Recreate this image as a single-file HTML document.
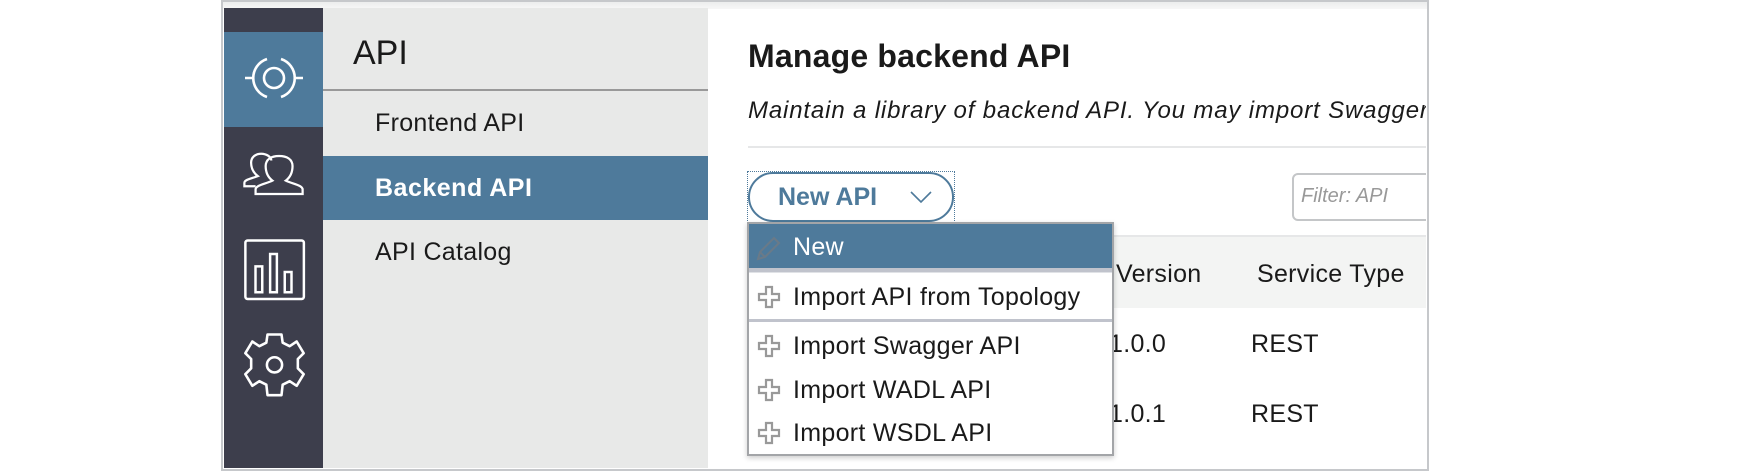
<!DOCTYPE html>
<html><head><meta charset="utf-8"><style>
*{box-sizing:border-box;margin:0;padding:0}
body{width:1756px;height:470px;background:#fff;position:relative;overflow:hidden;font-family:"Liberation Sans",sans-serif;color:#1a1a1a}
.a{position:absolute;white-space:nowrap}
.t{font-size:25px;line-height:30px;letter-spacing:0.3px}
</style></head><body>
<div class="a" style="left:221px;top:0;width:1208px;height:471px;border:2px solid #c6c8cb;background:#fff"></div>
<div class="a" style="left:223px;top:2px;width:1204px;height:7px;background:linear-gradient(#eceded,#f7f7f7)"></div>
<!-- sidebar -->
<div class="a" style="left:224px;top:8px;width:99px;height:460px;background:#3d3e4c"></div>
<div class="a" style="left:224px;top:32px;width:99px;height:95px;background:#4e7a9b"></div>
<svg class="a" style="left:224px;top:32px" width="99" height="95" viewBox="0 0 99 95">
<g fill="none" stroke="#fff" stroke-width="2.6">
<circle cx="50" cy="46" r="10"/>
<path d="M43 27 A20 20 0 0 0 43 65"/>
<path d="M57 27 A20 20 0 0 1 57 65"/>
<path d="M21 46 H30 M70 46 H79"/>
</g></svg>
<svg class="a" style="left:224px;top:147px" width="99" height="56" viewBox="0 0 88 50">
<g fill="none" stroke="#fff" stroke-width="2">
<path d="M28 35 H18 V32 C18 29 25 28 30 26 C26 23 24 19 24 14 C24 9 28 6 33 6 C38 6 42 9 42 12"/>
<path d="M28 42 V38 C28 34 37 33 43 30 C39 27 37 23 37 17 C37 11 42 8 49 8 C56 8 61 11 61 17 C61 23 59 27 55 30 C61 33 70 34 70 38 V42 Z"/>
</g></svg>
<svg class="a" style="left:224px;top:237px" width="99" height="70" viewBox="0 0 88 62">
<g fill="none" stroke="#fff" stroke-width="2.2">
<rect x="19" y="3" width="52" height="52" rx="2"/>
<rect x="28" y="26" width="6" height="23"/><rect x="41" y="15" width="6" height="34"/><rect x="54" y="31" width="6" height="18"/>
</g></svg>
<svg class="a" style="left:243px;top:331px" width="63" height="70" viewBox="0 0 54 60">
<g fill="none" stroke="#fff" stroke-width="2.2" stroke-linejoin="round">
<path d="M21 3 H33 L34 10 L40 13 L46 9 L52 19 L47 24 V32 L52 37 L46 47 L40 43 L34 46 L33 55 H21 L20 46 L14 43 L8 47 L2 37 L7 32 V24 L2 19 L8 9 L14 13 L20 10 Z"/>
<circle cx="27" cy="29" r="6.5"/>
</g></svg>
<!-- submenu -->
<div class="a" style="left:323px;top:8px;width:385px;height:460px;background:#e8e9e8"></div>
<div class="a" style="left:353px;top:33px;font-size:34px;line-height:40px">API</div>
<div class="a" style="left:323px;top:89px;width:385px;height:2px;background:#999"></div>
<div class="a t" style="left:375px;top:108px">Frontend API</div>
<div class="a" style="left:323px;top:156px;width:385px;height:64px;background:#4e7a9b"></div>
<div class="a" style="left:375px;top:156px;line-height:64px;font-size:25px;font-weight:bold;color:#fff;letter-spacing:0.5px">Backend API</div>
<div class="a t" style="left:375px;top:237px">API Catalog</div>
<!-- main -->
<div class="a" style="left:748px;top:36px;font-size:32px;line-height:40px;font-weight:bold;letter-spacing:0.2px">Manage backend API</div>
<div class="a" style="left:748px;top:96px;font-size:24px;line-height:30px;font-style:italic;letter-spacing:0.85px;width:678px;overflow:hidden">Maintain a library of backend API. You may import Swagger files</div>
<div class="a" style="left:748px;top:146px;width:678px;height:2px;background:#e6e7e8"></div>
<div class="a" style="left:747px;top:171px;width:208px;height:52px;border:1px dotted #4e7a9b"></div>
<div class="a" style="left:748px;top:172px;width:206px;height:50px;border:2px solid #4e7a9b;border-radius:25px;background:#fff"></div>
<div class="a" style="left:778px;top:182px;font-size:25px;line-height:30px;font-weight:bold;color:#4e7a9b">New API</div>
<svg class="a" style="left:909px;top:190px" width="24" height="14"><path d="M2 2 L12 12 L22 2" fill="none" stroke="#4e7a9b" stroke-width="1.6"/></svg>
<div class="a" style="left:1292px;top:173px;width:134px;height:48px;overflow:hidden">
<div class="a" style="left:0;top:0;width:160px;height:48px;border:2px solid #c4c6c8;border-radius:6px"></div>
<div class="a" style="left:9px;top:11px;font-size:20px;line-height:24px;font-style:italic;color:#999">Filter: API</div>
</div>
<div class="a" style="left:748px;top:235px;width:678px;height:2px;background:#e6e7e8"></div>
<div class="a" style="left:748px;top:237px;width:678px;height:71px;background:#f3f4f3"></div>
<div class="a t" style="left:1116px;top:259px">Version</div>
<div class="a t" style="left:1257px;top:259px">Service Type</div>
<div class="a t" style="left:1109px;top:329px">1.0.0</div>
<div class="a t" style="left:1251px;top:329px">REST</div>
<div class="a t" style="left:1109px;top:399px">1.0.1</div>
<div class="a t" style="left:1251px;top:399px">REST</div>
<!-- dropdown -->
<div class="a" style="left:747px;top:222px;width:367px;height:234px;border:2px solid #a3a5a8;background:#fff;box-shadow:0 2px 5px rgba(0,0,0,.2)"></div>
<div class="a" style="left:749px;top:224px;width:363px;height:44px;background:#4e7a9b"></div>
<svg class="a" style="left:754px;top:234px" width="30" height="28"><path d="M4 25 L6 18 L20 4 L25 9 L11 23 Z M6 18 L11 23" fill="none" stroke="#6a7a88" stroke-width="2"/></svg>
<div class="a t" style="left:793px;top:232px;color:#fff">New</div>
<div class="a" style="left:749px;top:268px;width:363px;height:5px;background:#c0c3cc;border-bottom:1px solid #e0e2e6"></div>
<div class="a" style="left:749px;top:319px;width:363px;height:3px;background:#c0c3cc"></div>
<div class="a t" style="left:793px;top:282px">Import API from Topology</div>
<div class="a t" style="left:793px;top:331px">Import Swagger API</div>
<div class="a t" style="left:793px;top:375px">Import WADL API</div>
<div class="a t" style="left:793px;top:418px">Import WSDL API</div>
<svg class="a" style="left:756px;top:285px" width="26" height="162">
<g fill="none" stroke="#999" stroke-width="2.2">
<path d="M10 2 H16 V9 H23 V15 H16 V22 H10 V15 H3 V9 H10 Z"/>
<path d="M10 51 H16 V58 H23 V64 H16 V71 H10 V64 H3 V58 H10 Z"/>
<path d="M10 95 H16 V102 H23 V108 H16 V115 H10 V108 H3 V102 H10 Z"/>
<path d="M10 138 H16 V145 H23 V151 H16 V158 H10 V151 H3 V145 H10 Z"/>
</g></svg>
</body></html>
